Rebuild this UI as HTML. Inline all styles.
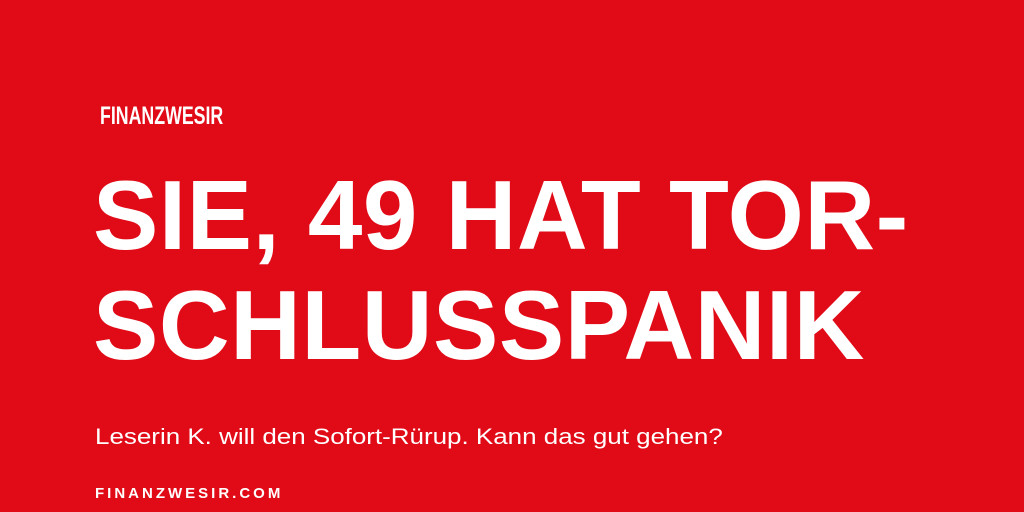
<!DOCTYPE html>
<html><head><meta charset="utf-8"><style>
html,body{margin:0;padding:0}
body{width:1024px;height:512px;background:#e10a17;position:relative;overflow:hidden;font-family:"Liberation Sans",sans-serif;color:#fff}
div{position:absolute;white-space:nowrap;line-height:1}
.h{left:100px;top:104px;font-size:25px;font-weight:bold;transform:scaleX(0.71);transform-origin:left}
.b{left:93px;font-size:98px;font-weight:bold;letter-spacing:0.5px}
.s{left:95px;top:426px;font-size:22px;transform:scaleX(1.18);transform-origin:left}
.f{left:95px;top:486px;font-size:15px;font-weight:bold;letter-spacing:3px}
</style></head><body>
<div class="h">FINANZWESIR</div>
<div class="b" style="top:166px">SIE, 49 HAT TOR-</div>
<div class="b" style="top:276px">SCHLUSSPANIK</div>
<div class="s">Leserin K. will den Sofort-Rürup. Kann das gut gehen?</div>
<div class="f">FINANZWESIR.COM</div>
</body></html>
